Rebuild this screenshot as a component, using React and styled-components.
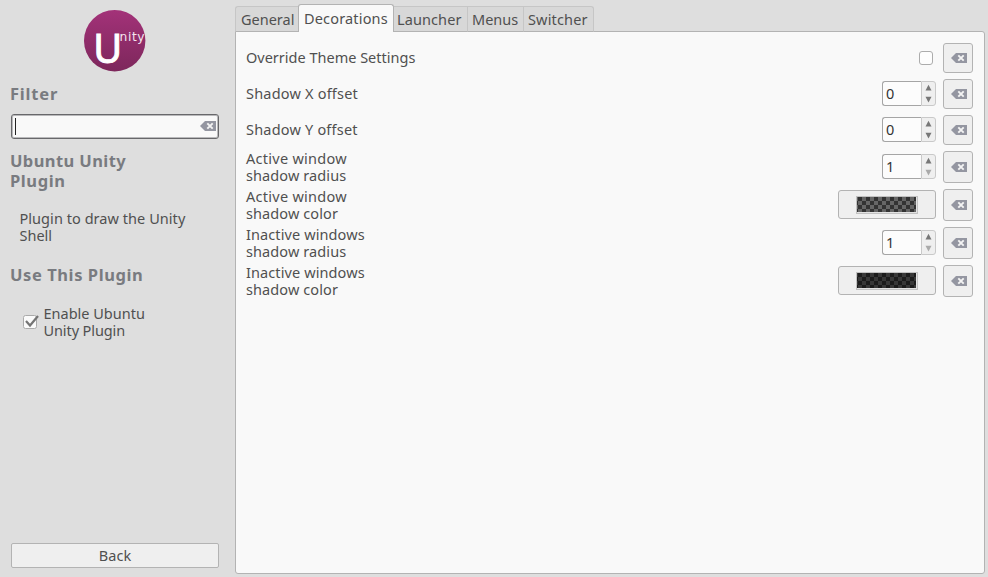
import React from 'react';
import styled, { createGlobalStyle } from 'styled-components';

const Global = createGlobalStyle`
  * { box-sizing: border-box; }
  body { margin: 0; background: #dedede; overflow: hidden; }
  input, button { font: inherit; color: inherit; }
`;

const Window = styled.div`
  width: 988px;
  height: 577px;
  display: grid;
  grid-template-columns: 235px 750px;
  background: #dedede;
  color: #505050;
  font: 14.5px/17px 'Noto Sans', sans-serif;
`;

const Sidebar = styled.aside`
  display: flex;
  flex-direction: column;
  padding: 10px 16px 9px 11px;
`;

const Logo = styled.svg`
  width: 72px;
  height: 62px;
  flex: none;
  margin-left: 73px;
  overflow: visible;
`;

const Heading = styled.h2`
  margin: ${p => p.$top}px 0 0 -1px;
  font-size: 16.5px;
  line-height: 20px;
  font-weight: 700;
  color: #797b80;
`;

const Line = styled.span`
  display: block;
  width: max-content;
  letter-spacing: ${p => p.$track || 0}px;
`;

const SearchBox = styled.div`
  display: flex;
  align-items: center;
  justify-content: space-between;
  height: 25px;
  margin-top: 10px;
  padding: 0 2px 1px 3px;
  background: #f9f9f9;
  border: 1px solid #68686b;
  border-radius: 3px;
  box-shadow: inset 0 0 0 1px #b9b9bb;
`;

const Caret = styled.span`
  width: 1px;
  height: 17px;
  background: #222;
`;

const Description = styled.div`
  margin: 19px 0 0 8.5px;
`;

const EnableRow = styled.label`
  display: flex;
  align-items: center;
  gap: 3.5px;
  margin: 20px 0 0 12px;
`;

const CheckIcon = styled.svg`
  width: 17px;
  height: 16px;
`;

const BackButton = styled.button`
  margin-top: auto;
  height: 25px;
  padding: 0;
  border: 1px solid #b3b3b3;
  border-radius: 2px;
  background: #efefef;
  display: flex;
  justify-content: center;
  align-items: center;
`;

const Notebook = styled.main`
  display: flex;
  flex-direction: column;
  padding: 4px 0 3px;
`;

const Tabs = styled.nav`
  display: flex;
  align-items: flex-end;
  height: 28px;
  margin-bottom: -1px;
  z-index: 1;
`;

const Tab = styled.div`
  width: ${p => p.$w}px;
  height: ${p => (p.$active ? 28 : 26)}px;
  padding-top: ${p => (p.$active ? 5 : 4)}px;
  padding-left: ${p => p.$pad}px;
  border: 1px solid ${p => (p.$active ? '#b3b3b3' : '#c6c6c6')};
  border-bottom: ${p => (p.$active ? 'none' : '1px solid #b3b3b3')};
  border-left-width: ${p => (p.$joined ? 0 : 1)}px;
  border-radius: ${p => (p.$active ? '3px 3px 0 0' : p.$last ? '0 3px 0 0' : p.$first ? '3px 0 0 0' : '0')};
  border-right-width: ${p => (p.$first ? 0 : 1)}px;
  background: ${p => (p.$active ? '#f9f9f9' : '#d8d8d8')};
`;

const Panel = styled.section`
  flex: 1;
  display: flex;
  flex-direction: column;
  gap: 6px;
  padding: 11px 11px 0 10px;
  background: #f9f9f9;
  border: 1px solid #b3b3b3;
  border-radius: 0 3px 3px 3px;
`;

const Row = styled.div`
  display: flex;
  align-items: center;
  height: ${p => (p.$tall ? 32 : 30)}px;
`;

const Label = styled.div`
  flex: 1;
  padding-bottom: ${p => (p.$single ? 2 : 0)}px;
`;

const ResetButton = styled.button`
  width: 30px;
  height: 100%;
  margin-left: 7px;
  padding: 0 0 0 2px;
  display: flex;
  align-items: center;
  justify-content: center;
  background: #efefef;
  border: 1px solid #b3b3b3;
  border-radius: 3px;
`;

const EmptyCheck = styled.span`
  width: 14px;
  height: 14px;
  margin-right: 3px;
  border: 1px solid #acacac;
  border-radius: 3px;
  background: #fdfdfd;
`;

const Spin = styled.div`
  display: flex;
  width: 54px;
  height: 25px;
  margin-top: -1px;
`;

const SpinValue = styled.div`
  width: 39px;
  padding: 3px 0 0 3px;
  color: #333;
  line-height: 17px;
  border: 1px solid #a5a5a5;
  border-right: 0;
  border-radius: 3px 0 0 3px;
  background: #fcfcfc;
`;

const Stepper = styled.svg`
  width: 15px;
  height: 25px;
  border: 1px solid #c9c9c9;
  border-radius: 0 3px 3px 0;
  background: #efefef;
`;

const ColorButton = styled.div`
  display: flex;
  align-items: center;
  justify-content: center;
  width: 98px;
  height: 29px;
  margin-top: -1px;
  background: #efefef;
  border: 1px solid #b3b3b3;
  border-radius: 3px;
`;

const Swatch = styled.span`
  width: 62px;
  height: 18px;
  padding: 0 1px 1px 0;
  border: 1px solid #c1c1c1;
  background: repeating-conic-gradient(${p => p.$a} 0 25%, ${p => p.$b} 0 50%) -3px 0 / 8px 8px content-box, #e2e2e2;
`;

const ClearIcon = () => (
  <svg width="16" height="10" viewBox="0 0 16 10">
    <path d="M0 5 5 0h11v10H5z" fill="#9496a1" />
    <path d="m7.3 2.3 5.4 5.4m0-5.4L7.3 7.7" stroke="#f4f4f4" strokeWidth="1.9" />
  </svg>
);

function SpinButton({ value, atMinimum }) {
  return (
    <Spin>
      <SpinValue>{value}</SpinValue>
      <Stepper viewBox="0 0 13 23">
        <path d="M6.5 2.7 9.5 8.5H3.5z" fill="#777" />
        <path d="M6.5 20.5 9.5 14.8H3.5z" fill={atMinimum ? '#aaa' : '#777'} />
      </Stepper>
    </Spin>
  );
}

function ColorPicker({ dark }) {
  return (
    <ColorButton>
      <Swatch $a={dark ? '#1c1c1c' : '#333'} $b={dark ? '#383838' : '#666'} />
    </ColorButton>
  );
}

const tabs = [
  { name: 'General', w: 63, pad: 5, first: true },
  { name: 'Decorations', w: 96, pad: 5, active: true },
  { name: 'Launcher', w: 74, pad: 3, joined: true },
  { name: 'Menus', w: 56, pad: 4, joined: true },
  { name: 'Switcher', w: 70, pad: 4, joined: true, last: true },
];

const settings = [
  { lines: ['Override Theme Settings'], control: <EmptyCheck /> },
  { lines: ['Shadow X offset'], control: <SpinButton value="0" /> },
  { lines: ['Shadow Y offset'], control: <SpinButton value="0" /> },
  { lines: ['Active window', 'shadow radius'], control: <SpinButton value="1" atMinimum /> },
  { lines: ['Active window', 'shadow color'], control: <ColorPicker /> },
  { lines: ['Inactive windows', 'shadow radius'], control: <SpinButton value="1" atMinimum /> },
  { lines: ['Inactive windows', 'shadow color'], control: <ColorPicker dark /> },
];

// Letter spacing for each line of text, in pixels.
const tracking = {
  Filter: 0.8,
  'Ubuntu Unity': 0.4,
  Plugin: -0.1 + 0.7,
  'Use This Plugin': 0.58,
  'Plugin to draw the Unity': 0.05,
  'Enable Ubuntu': 0,
  'Unity Plugin': -0.1,
  Decorations: 0.17,
  Launcher: 0.1,
  Switcher: 0.15,
  'Shadow X offset': 0.2,
  'Shadow Y offset': 0.2,
  'Active window': 0.27,
  'shadow radius': 0.1,
  'shadow color': 0.1,
  'Inactive windows': 0.1,
};

const T = ({ children }) => <Line $track={tracking[children]}>{children}</Line>;

export default function App() {
  return (
    <>
      <Global />
      <Window>
        <Sidebar>
          <Logo viewBox="84 10 72 62">
            <defs>
              <linearGradient id="plum" x1="0" y1="0" x2="0" y2="1">
                <stop offset="0" stopColor="#a33279" />
                <stop offset="1" stopColor="#7d275b" />
              </linearGradient>
            </defs>
            <circle cx="114.7" cy="40.7" r="30.7" fill="url(#plum)" />
            <text x="93.2" y="63" fontFamily="Noto Sans" fontSize="40.5" fontWeight="400" fill="#fff" stroke="#fff" strokeWidth="1" textLength="29" lengthAdjust="spacingAndGlyphs">U</text>
            <text x="119.6" y="41" fontFamily="DejaVu Sans" fontSize="12.3" fill="#f4e4ee" textLength="25" lengthAdjust="spacing">nity</text>
          </Logo>
          <Heading $top={12}><T>Filter</T></Heading>
          <SearchBox>
            <Caret />
            <ClearIcon />
          </SearchBox>
          <Heading $top={12}>
            <T>Ubuntu Unity</T>
            <T>Plugin</T>
          </Heading>
          <Description>
            <T>Plugin to draw the Unity</T>
            <T>Shell</T>
          </Description>
          <Heading $top={21}><T>Use This Plugin</T></Heading>
          <EnableRow>
            <CheckIcon viewBox="0 0 17 16">
              <rect x=".5" y="1.5" width="13" height="13" rx="2" fill="#fafafa" stroke="#aaa" />
              <path d="m3 7 4 4.5L15 2" fill="none" stroke="#747474" strokeWidth="2.2" />
            </CheckIcon>
            <div>
              <T>Enable Ubuntu</T>
              <T>Unity Plugin</T>
            </div>
          </EnableRow>
          <BackButton><T>Back</T></BackButton>
        </Sidebar>
        <Notebook>
          <Tabs>
            {tabs.map(t => (
              <Tab key={t.name} $w={t.w} $pad={t.pad} $active={t.active} $joined={t.joined} $first={t.first} $last={t.last}>
                <T>{t.name}</T>
              </Tab>
            ))}
          </Tabs>
          <Panel>
            {settings.map(s => (
              <Row key={s.lines.join(' ')} $tall={s.lines.length > 1}>
                <Label $single={s.lines.length === 1}>{s.lines.map(l => <T key={l}>{l}</T>)}</Label>
                {s.control}
                <ResetButton><ClearIcon /></ResetButton>
              </Row>
            ))}
          </Panel>
        </Notebook>
      </Window>
    </>
  );
}
